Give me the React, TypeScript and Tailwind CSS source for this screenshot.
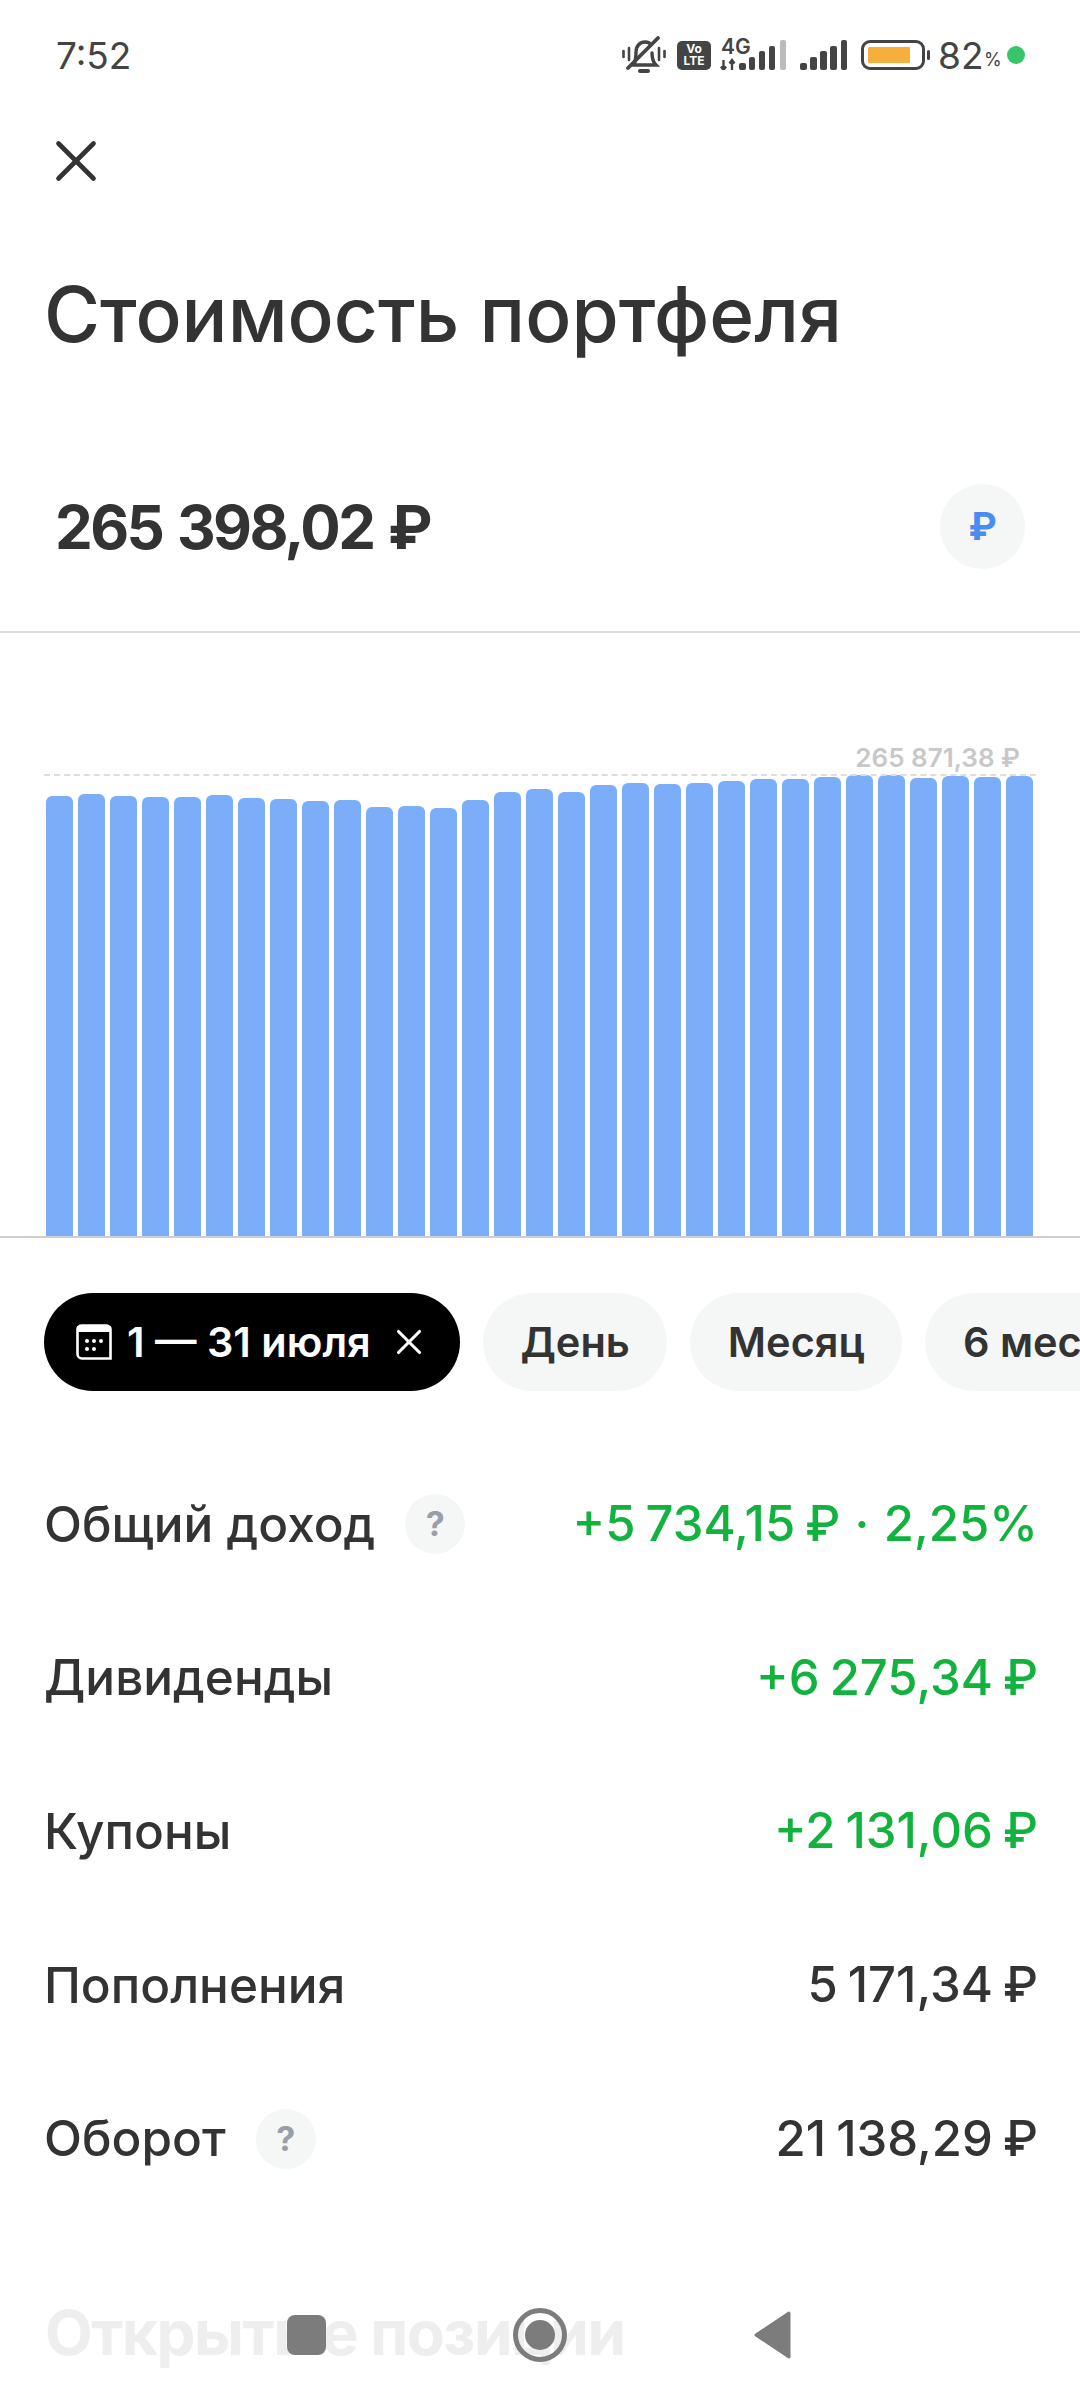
import React from 'react';
import { X } from 'lucide-react';

// page y of each bar's top edge, left to right
const barTops = [796, 794, 796, 797, 797, 795, 798, 799, 801, 800, 807, 806, 808, 800, 792, 789, 792, 785, 783, 784, 783, 781, 779, 779, 777, 775, 775, 778, 776, 777, 776];
const CHART_BOTTOM = 1236;

const rows = [
  { label: 'Общий доход', hint: true, value: '+5 734,15 ₽ \u200A·\u200A 2,25%', green: true },
  { label: 'Дивиденды', value: '+6 275,34 ₽', green: true },
  { label: 'Купоны', value: '+2 131,06 ₽', green: true },
  { label: 'Пополнения', value: '5 171,34 ₽' },
  { label: 'Оборот', hint: true, value: '21 138,29 ₽' },
];

const Signal: React.FC = () => (
  <svg width="47" height="30" viewBox="0 0 47 30" className="block">
    <rect x="0" y="23" width="7" height="7" rx="2" fill="#444" />
    <rect x="10" y="17" width="7" height="13" rx="2" fill="#444" />
    <rect x="20" y="11" width="7" height="19" rx="2" fill="#444" />
    <rect x="30" y="6" width="7" height="24" rx="2" fill="#444" />
    <rect x="41" y="0" width="6" height="30" rx="2" fill="#444" />
  </svg>
);

const StatusBar: React.FC = () => (
  <div className="h-[110px] flex items-center justify-between pl-[56px] pr-[55px] text-[#444]">
    <span className="text-[37px] leading-none">7:52</span>
    <div className="flex items-center">
      {/* muted vibrate */}
      <svg width="44" height="38" viewBox="0 0 44 38" fill="none" stroke="#444" strokeWidth="3.4" strokeLinecap="round" className="block">
        <path d="M1.500 15v6M7 12v12M37 12v12M42.500 15v6" strokeWidth="2.600" />
        <path d="M11 29c3-3 3-7 3-13 0-6 4-10 9-10 3 0 5 1 6 3M30 17c0 5 1 9 4 12H11" />
        <path d="M18 35h8" strokeWidth="4" />
        <path d="M6 32 36 2" strokeWidth="3.800" />
      </svg>
      <div className="ml-[11px] w-[34px] h-[29px] rounded-[5px] bg-[#444] text-white flex flex-col items-center justify-center text-[12px] leading-[12px] font-bold">
        <span>Vo</span>
        <span>LTE</span>
      </div>
      <div className="ml-[9px] w-[66px] h-[30px] relative">
        <span className="absolute left-[1px] -top-[4px] text-[21px] leading-none font-semibold">4G</span>
        <svg width="66" height="30" viewBox="0 0 66 30" className="block absolute inset-0">
          <path d="M3.500 20v10M1 26.500l2.500 3.500 2.500-3.500M12 30V20M9.500 23.500 12 20l2.500 3.500" stroke="#444" strokeWidth="2.400" fill="none" />
          <rect x="19" y="23" width="7" height="7" rx="2" fill="#444" />
          <rect x="29" y="17" width="6" height="13" rx="2" fill="#444" />
          <rect x="39" y="11" width="6" height="19" rx="2" fill="#444" />
          <rect x="49" y="6" width="6" height="24" rx="2" fill="#444" />
          <rect x="60" y="0" width="6" height="30" rx="2" fill="#bbb" />
        </svg>
      </div>
      <div className="ml-[14px]">
        <Signal />
      </div>
      <div className="ml-[14px] w-[64px] h-[30px] rounded-[9px] border-[3px] border-[#444] p-[4px]">
        <div className="h-full w-[42px] rounded-[1px] bg-[#f6ae3c]" />
      </div>
      <div className="ml-[2px] w-[3px] h-[10px] rounded-full bg-[#444]" />
      <span className="ml-[8px] w-[44px] text-[37px] leading-none">82</span>
      <span className="ml-[2px] w-[16px] mt-[10px] text-[18px] leading-none">%</span>
      <div className="ml-[7px] w-[18px] h-[18px] rounded-full bg-[#36c668]" />
    </div>
  </div>
);

const HintDot: React.FC = () => (
  <div className="ml-[30px] w-[60px] h-[60px] rounded-full bg-[#f5f7f7] flex items-center justify-center text-[34px] font-bold text-[#9a9ea8]">?</div>
);

const App: React.FC = () => {
  return (
    <div className="relative w-[1080px] h-[2400px] overflow-hidden bg-white font-['Inter','Noto_Sans',sans-serif] text-[#333]">
      <StatusBar />

      <div className="mt-[15px] pl-[41px] h-[72px] flex items-center">
        <X size={70} strokeWidth={1.6} color="#333" />
      </div>

      <h1 className="ml-[44px] mt-[69px] text-[76.500px] leading-[96px] font-[550] whitespace-nowrap">Стоимость портфеля</h1>

      {/* balance */}
      <div className="mt-[122px] h-[85px] pl-[55px] pr-[55px] flex items-center justify-between">
        <span className="text-[60px] tracking-[-2.600px] [word-spacing:3px] font-bold leading-none whitespace-nowrap">265 398,02 ₽</span>
        <div className="w-[85px] h-[85px] rounded-full bg-[#f5f7f7] flex items-center justify-center text-[38px] font-bold text-[#4a8cf0]">₽</div>
      </div>
      <div className="mt-[62px] h-[2px] bg-[#dedede]" />

      {/* chart */}
      <div className="relative h-[605px] pl-[46px] flex items-end gap-[5px] border-b-[2px] border-[#cfcfcf]">
        {barTops.map((top, i) => (
          <div key={i} className="w-[27px] rounded-t-[6px] bg-[#7badf9]" style={{ height: CHART_BOTTOM - top }} />
        ))}
        <div className="absolute left-[44px] w-[992px] top-[141px] border-t-[2px] border-dashed border-[#dddddd]" />
        <span className="absolute right-[60px] top-[109px] text-[26px] font-semibold leading-[32px] text-[#c8c8c8]">265 871,38 ₽</span>
      </div>

      {/* period chips */}
      <div className="mt-[55px] pl-[44px] flex gap-[23px] overflow-hidden whitespace-nowrap">
        <div className="shrink-0 h-[98px] w-[416px] rounded-full bg-black text-white flex items-center pl-[32px] text-[41.500px] font-semibold">
          <svg width="36" height="36" viewBox="0 0 36 36" fill="none" className="block">
            <path d="M1.500 6a4 4 0 0 1 4-4.500h25a4 4 0 0 1 4 4.500v28.500H6a4.500 4.500 0 0 1-4.500-4.500z" stroke="#fff" strokeWidth="2.600" />
            <path d="M1.500 2h33v6h-33z" fill="#fff" />
            <circle cx="11" cy="17" r="2" fill="#fff" />
            <circle cx="18" cy="17" r="2" fill="#fff" />
            <circle cx="25" cy="17" r="2" fill="#fff" />
            <circle cx="11" cy="25" r="2" fill="#fff" />
            <circle cx="18" cy="25" r="2" fill="#fff" />
          </svg>
          <span className="ml-[15px]">1 — 31 июля</span>
          <X size={42} strokeWidth={1.800} color="#fff" className="ml-[17px]" />
        </div>
        {['День', 'Месяц', '6 месяцев'].map((label) => (
          <div key={label} className="shrink-0 h-[98px] px-[37.500px] rounded-full bg-[#f5f7f7] flex items-center text-[41.500px] font-semibold">
            {label}
          </div>
        ))}
      </div>

      {/* totals */}
      <div className="mt-[56px] pl-[44px] pr-[42px]">
        {rows.map((row) => (
          <div key={row.label} className="h-[153.700px] flex items-center justify-between">
            <div className="flex items-center">
              <span className="text-[49.500px] font-[550] whitespace-nowrap">{row.label}</span>
              {row.hint && <HintDot />}
            </div>
            <span className={`text-[49px] [word-spacing:-3px] font-[550] whitespace-nowrap ${row.green ? 'text-[#12b23f]' : ''}`}>{row.value}</span>
          </div>
        ))}
      </div>

      <h2 className="ml-[45px] mt-[80px] text-[62px] tracking-[-1.500px] leading-[76px] font-bold text-[#eeeeee] whitespace-nowrap">Открытые позиции</h2>

      {/* system nav, drawn over the page */}
      <div className="absolute left-0 right-0 top-[2308px] h-[54px]">
        <div className="absolute left-[287px] top-[7px] w-[39px] h-[40px] rounded-[8px] bg-[#7c7c7c]" />
        <div className="absolute left-[513px] top-0 w-[54px] h-[54px] rounded-full border-[5px] border-[#7c7c7c] flex items-center justify-center">
          <div className="w-[30px] h-[30px] rounded-full bg-[#7c7c7c]" />
        </div>
        <svg width="38" height="48" viewBox="0 0 38 48" className="absolute left-[754px] top-[3px] block">
          <path d="M35 2 2 24l33 22z" fill="#7c7c7c" stroke="#7c7c7c" strokeWidth="3" strokeLinejoin="round" />
        </svg>
      </div>
    </div>
  );
};

export default App;
